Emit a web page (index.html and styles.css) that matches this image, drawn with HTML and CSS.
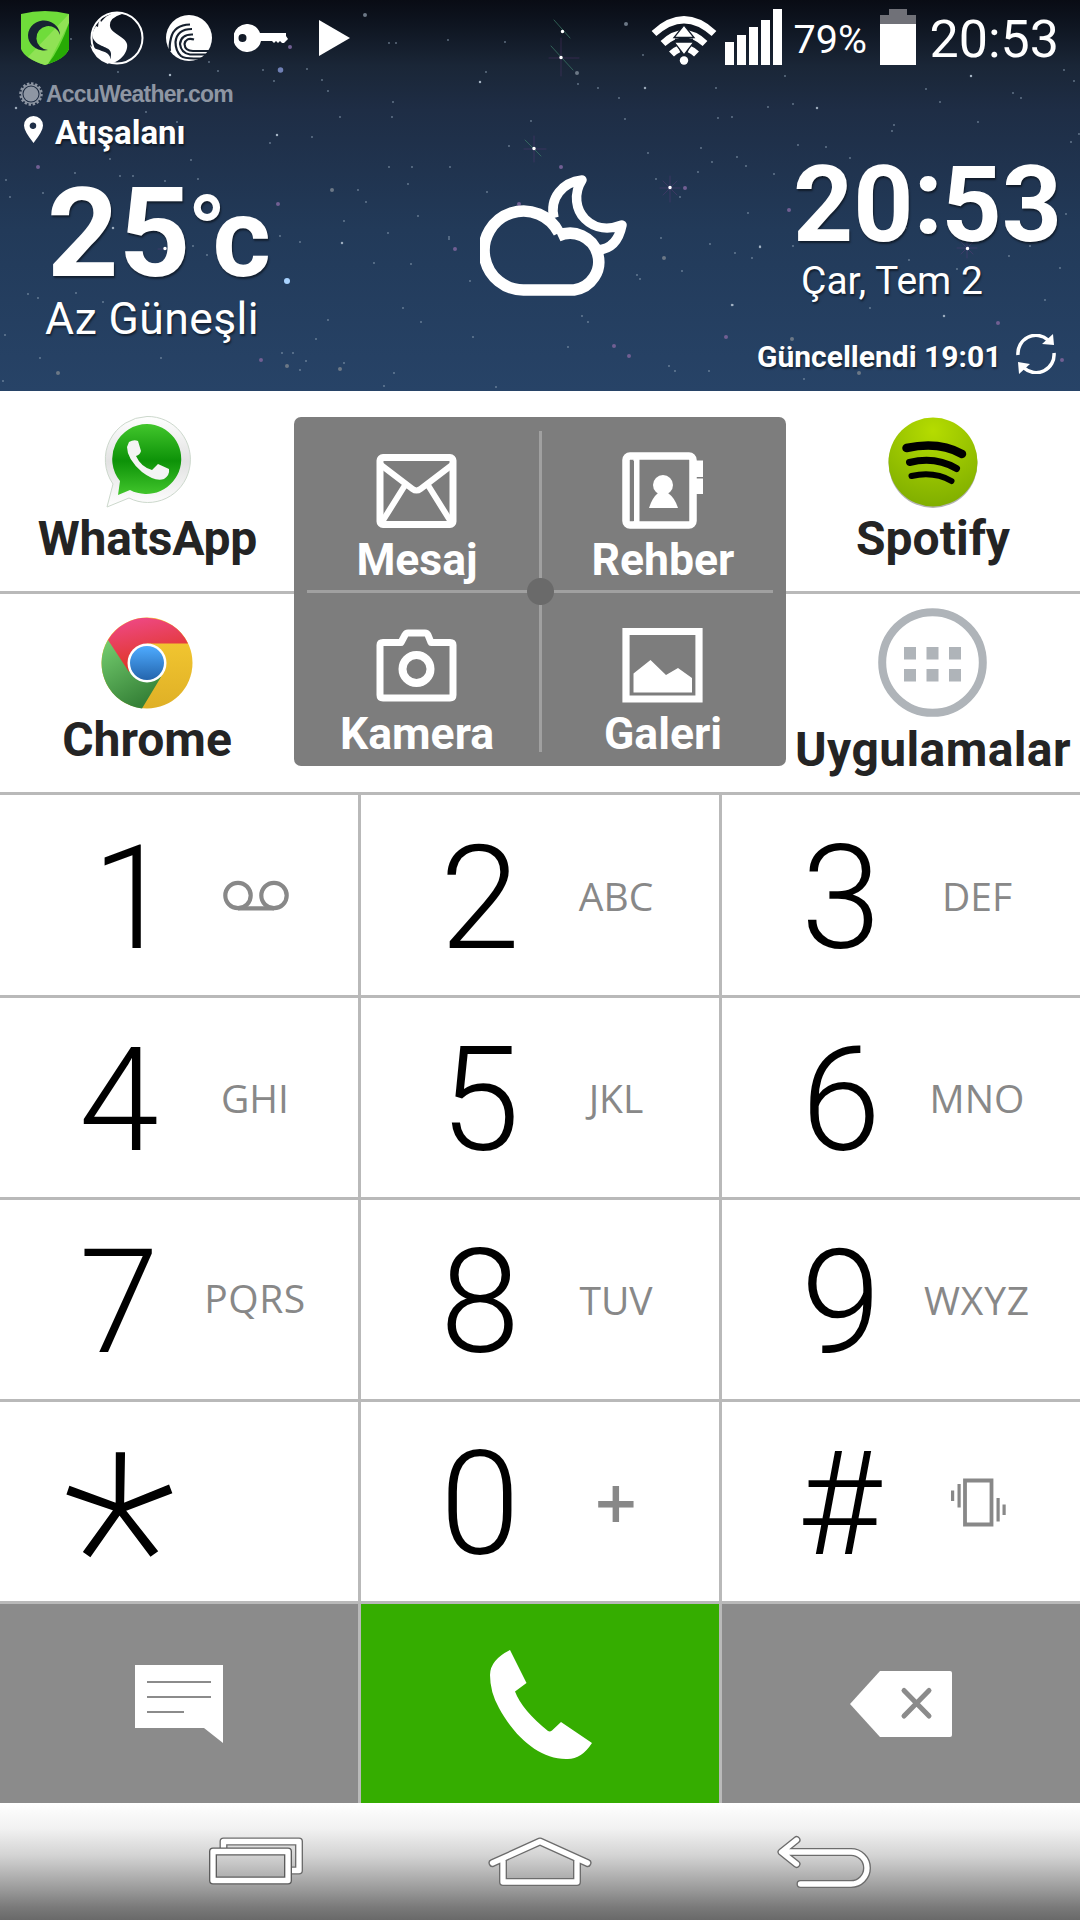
FILE: index.html
```html
<!DOCTYPE html>
<html lang="tr">
<head>
    <meta charset="UTF-8">
    <meta name="viewport" content="width=device-width, initial-scale=1.0">
    <title>Telefon</title>
    <link rel="stylesheet" href="styles.css">
</head>
<body>
    <div class="phone">
        <div class="header">
            <!-- Night sky -->
            <svg class="sky" viewBox="0 0 1080 391" fill="none" stroke-linecap="round">
                <path stroke="#8fa3b5" stroke-opacity=".6" stroke-width="2" d="M71 39h0M170 75h0M118 72h0M209 62h0M218 71h0M263 70h0M274 81h0M307 69h0M322 80h0M328 91h0M389 43h0M396 43h0M448 40h0M505 42h0M480 82h0M486 72h0M393 102h0M340 117h0M392 117h0M312 137h0M277 135h0M270 143h0M146 112h0M177 122h0M110 159h0M75 173h0M191 160h0M120 176h0M133 176h0M165 181h0M198 179h0M412 167h0M389 167h0M450 167h0M487 192h0M509 146h0M531 121h0M408 184h0M358 190h0M366 202h0M418 216h0M344 221h0M388 233h0M300 242h0M374 263h0M449 239h0M411 264h0M449 237h0M470 281h0M280 236h0M207 255h0M193 246h0M28 294h0M38 298h0M103 302h0M76 293h0M40 358h0M161 358h0M282 353h0M293 353h0M306 361h0M344 363h0M328 320h0M316 339h0M403 308h0M421 322h0M473 337h0M496 387h0M384 386h0M394 373h0M300 370h0M3 381h0M5 335h0M10 197h0M6 180h0M43 193h0M643 55h0M598 88h0M578 84h0M619 98h0M625 119h0M716 88h0M793 104h0M785 76h0M768 107h0M732 117h0M718 118h0M701 148h0M648 153h0M737 157h0M746 166h0M712 162h0M698 172h0M774 174h0M850 158h0M864 187h0M826 147h0M894 125h0M892 131h0M940 102h0M926 89h0M971 76h0M1021 98h0M1013 93h0M978 122h0M1050 52h0M1064 70h0M1074 81h0M1071 142h0M1079 134h0M661 238h0M682 271h0M710 244h0M735 253h0M760 246h0M752 258h0M798 145h0M582 316h0M588 322h0M637 275h0M669 366h0M675 371h0M733 305h0M793 246h0M906 228h0M1045 300h0M1060 268h0M909 260h0M1009 256h0M1030 246h0M1066 214h0M804 379h0M709 371h0M870 308h0M957 269h0M568 347h0M640 279h0M680 197h0M656 179h0M748 213h0"/>
                <path stroke="#b9c7d6" stroke-opacity=".8" stroke-width="2.500" d="M16 108h0M170 75h0M113 228h0M480 82h0M817 108h0M971 76h0M645 88h0M732 305h0M944 316h0M760 247h0M342 243h0M277 135h0"/>
                <path stroke="#715f93" stroke-width="4" d="M38 167h0M278 204h0M290 47h0M261 360h0M455 249h0M519 204h0M726 337h0M789 210h0M685 188h0M998 323h0M1062 360h0M561 167h0M629 356h0M614 346h0"/>
                <path stroke="#6c7886" stroke-width="4" d="M332 190h0M365 15h0M58 373h0M287 366h0M340 369h0M859 373h0M792 339h0M626 24h0M664 258h0M577 73h0"/>
                <path stroke="#7080b5" stroke-width="5.500" d="M280.500 70h0"/>
                <path stroke="#a9d3ff" stroke-width="6" d="M287 281h0"/>
                <path stroke="#3d7d68" stroke-opacity=".7" d="M551 46l22 24M554 20l16 18M525 140l16 16"/>
                <path stroke="#7b3f8b" stroke-opacity=".3" d="M561 38v38M549 58h30M534 136v26M524 149h22M670 176v26M660 188h20M663 181l14 14M677 181l-14 14M967 238v20M957 248h20M961 242l12 12M973 242l-12 12M158 249h8"/>
                <path stroke="#fff" stroke-width="3.500" d="M561 57.500h0M562.500 31.500h0M534 148.500h0M670 187.500h0M967.500 248.500h0M165 248.500h0"/>
            </svg>

            <!-- Status bar -->
            <div class="status-bar">
                <div class="status-left">
                    <svg class="ic-shield" width="48" height="54" viewBox="0 0 48 54">
                        <path fill="#6fdc3a" d="M0 3Q24-3 48 3V38Q44 48 24 54Q4 48 0 38Z"/>
                        <path fill="#98e35c" d="M48 3V12L27 53L24 54Q14 51 7 46Z" opacity=".8"/>
                        <path fill="#27aa05" d="M48 12V38Q44 48 27 53Q39 38 48 12Z"/>
                        <path fill="#172333" d="M39 24A16 15 0 1 0 27 39A12 12 0 1 1 39 24Z"/>
                    </svg>
                    <svg class="ic-snap" width="54" height="54" viewBox="0 0 54 54">
                        <circle cx="27" cy="27" r="25.500" fill="none" stroke="#fff" stroke-width="2"/>
                        <path fill="#fff" d="M27 1Q17 3 11 11L10 8Q8 12 8 16L6 15Q0 24 4 29C9 37 22 35 21 44Q21 50 16 51C25 56 39 43 37 33C35 25 21 23 20 15Q19 7 32 3Z"/>
                        <path fill="#fff" d="M0 34C5 40 18 39 20 46Q21 50 18 53Q4 48 0 34Z"/>
                    </svg>
                    <svg class="ic-torrent" width="46" height="46" viewBox="0 0 46 46">
                        <circle cx="23" cy="23" r="23" fill="#fff"/>
                        <g fill="none" stroke="#16202e" stroke-width="2.200">
                            <path d="M24 9.500Q8 10 5 23Q3 31 4 36"/>
                            <path d="M26 14Q11 14 9.500 27Q9.500 36 15 41Q18 43.500 28 43.500H38"/>
                            <path d="M27 19.500Q15 19 14 29Q15 38 24 39.500H42"/>
                            <path d="M28 24.500Q20 22 18.500 29Q19 36 27 36H46"/>
                        </g>
                    </svg>
                    <svg class="ic-key" width="54" height="28" viewBox="0 0 54 28">
                        <path fill="#fff" fill-rule="evenodd" d="M14 0A14 14 0 0 1 26 9H52V12L54 15L50 19H48L46 17L44 19L42 17L40 19L38 17H27A14 14 0 1 1 14 0ZM8.500 10A4 4 0 1 0 8.500 18A4 4 0 0 0 8.500 10Z"/>
                    </svg>
                    <svg class="ic-play" width="31" height="36" viewBox="0 0 31 36"><path fill="#fff" d="M0 0L31 18L0 36Z"/></svg>
                </div>
                <div class="status-right">
                    <svg class="ic-wifi" width="66" height="49" viewBox="0 0 66 49">
                        <g fill="none" stroke="#fff" stroke-width="7">
                            <path d="M3 17.500Q33-10 63 17.500"/>
                            <path d="M12 27.500Q33 8 54 27.500"/>
                            <path d="M20.500 38Q24 34.500 28 33M45.500 38Q42 34.500 38 33"/>
                        </g>
                        <path fill="#fff" stroke="#131c2a" stroke-width="1.300" d="M33 9L43 21.500H23ZM23 26H43L33 39Z"/>
                        <path stroke="#131c2a" stroke-width="3" d="M24 24H42"/>
                        <circle cx="33" cy="44.500" r="4.200" fill="#fff"/>
                    </svg>
                    <svg class="ic-signal" width="57" height="56" viewBox="0 0 57 56"><path fill="#fff" d="M0 33h9v23H0zM12 26h9v30h-9zM24 18h9v38h-9zM36 11h9v45h-9zM48 0h9v56h-9z"/></svg>
                    <span class="battery-text">79%</span>
                    <svg class="ic-battery" width="36" height="56" viewBox="0 0 36 56"><path fill="#707178" d="M9 0h18v6h9v9H0V6h9z"/><path fill="#fff" d="M0 15h36v41H0z"/></svg>
                    <span class="status-time">20:53</span>
                </div>
            </div>

            <!-- Weather widget -->
            <div class="weather">
                <div class="weather-now">
                    <div class="brand">
                        <svg width="24" height="24" viewBox="0 0 24 24">
                            <circle cx="12" cy="12" r="10.500" fill="none" stroke="#8e96a3" stroke-width="2.500" stroke-dasharray="2.400 1.700"/>
                            <circle cx="12" cy="12" r="9.300" fill="none" stroke="#8e96a3" stroke-width="1.500"/>
                            <circle cx="12" cy="12" r="7.500" fill="#8e96a3"/>
                        </svg>
                        <span>AccuWeather.com</span>
                    </div>
                    <div class="location">
                        <svg width="19" height="27" viewBox="0 0 19 27"><path fill="#fff" fill-rule="evenodd" d="M9.500 0A9.500 9.500 0 0 1 19 9.500Q19 15 9.500 27Q0 15 0 9.500A9.500 9.500 0 0 1 9.500 0ZM9.500 6.500A3.300 3.300 0 1 0 9.500 13A3.300 3.300 0 0 0 9.500 6.500Z"/></svg>
                        <span>Atışalanı</span>
                    </div>
                    <div class="temp">25<span class="degree">°</span><span class="unit">c</span></div>
                    <div class="condition">Az Güneşli</div>
                </div>
                <svg class="ic-weather" width="148" height="124" viewBox="480 174 148 124" fill="none" stroke="#fff" stroke-linejoin="round">
                    <path stroke-width="9.500" d="M554 218C549 198 563 182 582 180C573 194 576 210 585 219C595 229 609 230 622 225C619 240 611 249 598 250"/>
                    <path stroke-width="11.500" stroke-linejoin="miter" d="M558 236A28.500 28.500 0 1 1 574 290H525A39.500 39.500 0 1 1 559 233"/>
                </svg>
                <div class="weather-clock">
                    <div class="clock">20<span class="colon">:</span>53</div>
                    <div class="date">Çar, Tem 2</div>
                    <div class="updated">
                        <span>Güncellendi 19:01</span>
                        <svg width="40" height="40" viewBox="0 0 40 40">
                            <g fill="none" stroke="#fff" stroke-width="3.500"><path d="M2 21A18 18 0 0 1 32 6"/><path d="M38 19A18 18 0 0 1 8 34"/></g>
                            <path fill="#fff" d="M37 0L38 11L26 10ZM3 40L2 28L14 30Z"/>
                        </svg>
                    </div>
                </div>
            </div>
        </div>

        <!-- Shortcuts -->
        <div class="shortcuts">
            <div class="apps">
                <div class="app">
                    <svg width="92" height="94" viewBox="0 0 92 94">
                        <defs>
                            <linearGradient id="waGreen" x2="0" y2="1"><stop offset="0" stop-color="#42c62c"/><stop offset=".52" stop-color="#0d9208"/><stop offset="1" stop-color="#42c62c"/></linearGradient>
                            <linearGradient id="waEdge" x2="0" y2="1"><stop offset="0" stop-color="#fff"/><stop offset=".5" stop-color="#e2e2e2"/><stop offset="1" stop-color="#fff"/></linearGradient>
                        </defs>
                        <path fill="url(#waEdge)" stroke="#ccd8cc" d="M46 1.500A42.500 43 0 1 1 28 83L6 92L12 69A43 43 0 0 1 46 1.500Z"/>
                        <path fill="url(#waGreen)" d="M46 9A35 35 0 1 1 29 75L17 80L19 66A35 35 0 0 1 46 9Z"/>
                        <path fill="#f4f4f4" d="M28 27Q33 24 37 26L40 36Q39 40 35 41Q40 52 51 55L57 49L68 54Q69 60 63 64Q54 67 41 57Q26 44 26 32Z"/>
                    </svg>
                    <span class="tight">WhatsApp</span>
                </div>
                <div class="app">
                    <svg width="92" height="94" viewBox="0 0 92 94">
                        <defs>
                            <linearGradient id="crRed" x2="0.300" y2="1"><stop offset="0" stop-color="#f04a8d"/><stop offset="1" stop-color="#df3520"/></linearGradient>
                            <linearGradient id="crGreen" x2="0.500" y2="1"><stop offset="0" stop-color="#76cf70"/><stop offset="1" stop-color="#368238"/></linearGradient>
                            <linearGradient id="crYellow" x2="0" y2="1"><stop offset="0" stop-color="#f8cd34"/><stop offset="1" stop-color="#dfb026"/></linearGradient>
                            <linearGradient id="crBlue" x2="0" y2="1"><stop offset="0" stop-color="#4eabff"/><stop offset="1" stop-color="#2465ad"/></linearGradient>
                        </defs>
                        <circle cx="46" cy="47" r="45.500" fill="url(#crYellow)"/>
                        <path fill="url(#crGreen)" d="M7 24A45.500 45.500 0 0 0 41 92.500L60 61L28 50Z"/>
                        <path fill="url(#crRed)" d="M7 24A45.500 45.500 0 0 1 87 27.500H46L28 56Z"/>
                        <circle cx="46" cy="47" r="19.500" fill="#fff"/>
                        <circle cx="46" cy="47" r="17" fill="url(#crBlue)"/>
                    </svg>
                    <span>Chrome</span>
                </div>
            </div>

            <div class="panel">
                <div class="panel-item">
                    <svg width="82" height="78" viewBox="0 0 82 78" fill="none" stroke="#fff" stroke-width="7" stroke-linejoin="round">
                        <rect x="4" y="5.500" width="73" height="67" rx="3"/>
                        <path d="M5 13L36.500 37Q40.500 40 44.500 37L76 13M6 70L28.500 34M75 70L52.500 34" stroke-width="6"/>
                    </svg>
                    <span>Mesaj</span>
                </div>
                <div class="panel-item">
                    <svg width="82" height="78" viewBox="0 0 82 78">
                        <rect x="4" y="4" width="67" height="69" rx="4" fill="none" stroke="#fff" stroke-width="7.500"/>
                        <path fill="#fff" d="M11.500 7h6v64h-6zM73 8.500h8v16.500h-8zM73 26.500h8V42h-8z"/>
                        <path fill="#7d7d7d" d="M9 9h3v60H9z"/>
                        <circle cx="41" cy="33" r="10" fill="#fff"/>
                        <path fill="#fff" d="M36 41H46Q53 46 56 56H27Q30 46 36 41Z"/>
                    </svg>
                    <span>Rehber</span>
                </div>
                <div class="panel-item">
                    <svg width="82" height="78" viewBox="0 0 82 78" fill="none" stroke="#fff" stroke-width="7" stroke-linejoin="round">
                        <path d="M4 18Q4 15.500 7 15.500H25L29 8Q30 6 32 6H49Q51 6 52 8L55 15.500H74Q77 15.500 77 18V68Q77 71 74 71H7Q4 71 4 68Z"/>
                        <circle cx="40.500" cy="42" r="14" stroke-width="8"/>
                    </svg>
                    <span>Kamera</span>
                </div>
                <div class="panel-item">
                    <svg width="82" height="78" viewBox="0 0 82 78">
                        <path fill="none" stroke="#fff" stroke-width="7.200" d="M4 4.500h73v67.500H4z"/>
                        <path fill="#fff" d="M11.500 46.500L28.500 33L44 48L56 41L70 51V65.500H11.500Z"/>
                    </svg>
                    <span>Galeri</span>
                </div>
            </div>

            <div class="apps">
                <div class="app">
                    <svg width="92" height="94" viewBox="0 0 92 94">
                        <defs>
                            <radialGradient id="spGreen" cx=".5" cy=".15" r=".9"><stop offset="0" stop-color="#b5dc00"/><stop offset="1" stop-color="#7dac00"/></radialGradient>
                        </defs>
                        <circle cx="46" cy="48.500" r="44.500" fill="#000" opacity=".3"/>
                        <circle cx="46" cy="47" r="44.500" fill="url(#spGreen)"/>
                        <g fill="none" stroke="#000" stroke-linecap="round">
                            <path stroke-width="8.500" d="M19.500 33Q52 26 75 39"/>
                            <path stroke-width="7" d="M22.500 47.500Q48 41 69.500 53.500"/>
                            <path stroke-width="6" d="M24.500 61Q47 56 64.500 66"/>
                        </g>
                    </svg>
                    <span>Spotify</span>
                </div>
                <div class="app app-drawer">
                    <svg width="110" height="110" viewBox="0 0 110 110">
                        <circle cx="54.500" cy="54.500" r="50.300" fill="none" stroke="#afb4b9" stroke-width="8"/>
                        <path fill="#afb4b9" d="M26 39h12v12.500H26zM48.500 39h12v12.500h-12zM71 39h12v12.500H71zM26 61h12v12.500H26zM48.500 61h12v12.500h-12zM71 61h12v12.500H71z"/>
                    </svg>
                    <span>Uygulamalar</span>
                </div>
            </div>
        </div>

        <!-- Dial pad -->
        <div class="keypad">
            <div class="key"><span class="digit one">1</span><span class="letters voicemail"><svg width="66" height="31" viewBox="0 0 66 31" fill="none" stroke="#888" stroke-width="4.200"><circle cx="15" cy="15.500" r="12.700"/><circle cx="51" cy="15.500" r="12.700"/><path d="M15 28.300H51"/></svg></span></div>
            <div class="key"><span class="digit">2</span><span class="letters">ABC</span></div>
            <div class="key"><span class="digit">3</span><span class="letters">DEF</span></div>
            <div class="key"><span class="digit">4</span><span class="letters">GHI</span></div>
            <div class="key"><span class="digit">5</span><span class="letters">JKL</span></div>
            <div class="key"><span class="digit">6</span><span class="letters">MNO</span></div>
            <div class="key"><span class="digit">7</span><span class="letters pqrs">PQRS</span></div>
            <div class="key"><span class="digit">8</span><span class="letters">TUV</span></div>
            <div class="key"><span class="digit">9</span><span class="letters wxyz">WXYZ</span></div>
            <div class="key"><span class="digit star">*</span></div>
            <div class="key"><span class="digit">0</span><span class="letters plus">+</span></div>
            <div class="key"><span class="digit hash">#</span><span class="letters vibrate"><svg width="55" height="49" viewBox="0 0 55 49"><path fill="none" stroke="#888" stroke-width="3.800" d="M14 2.500h26.500v44H14z"/><path fill="#888" d="M0 12.500h3.200v10.500H0zM6.500 6h3.200v23.500H6.500zM45.500 20h3.200v23.500h-3.200zM51.500 26.500h3.200V37h-3.200z"/></svg></span></div>
            <div class="key action">
                <svg width="88" height="78" viewBox="0 0 88 78"><path fill="#fff" d="M0 0H88V78L69 63H0Z"/><path stroke="#8b8b8b" stroke-width="2.200" d="M12 17H76M12 32H76M12 47H49"/></svg>
            </div>
            <div class="key action call">
                <svg width="102" height="110" viewBox="490 1650 102 110"><path fill="#fff" d="M510 1650L526.500 1683L515 1691.500Q522 1710 548 1731Q550 1732 552 1730.500L561 1722L592 1743Q581 1760 566 1759C539 1759 514 1736 499 1708Q490 1692 490 1675Q490 1660 510 1650Z"/></svg>
            </div>
            <div class="key action erase">
                <svg width="102" height="66" viewBox="0 0 102 66"><path fill="#fff" d="M0 33L30 0H100Q102 0 102 2V64Q102 66 100 66H30Z"/><path stroke="#8b8b8b" stroke-width="5" stroke-linecap="round" d="M54 19.500L79 45M79 19.500L54 45"/></svg>
            </div>
        </div>

        <!-- System buttons: each shape is stroked dark first, then white on top -->
        <div class="nav-bar">
            <svg width="96" height="50" viewBox="208 1838 96 50" fill="none" stroke-linejoin="round">
                <path stroke="#6c6c6c" stroke-width="8" d="M223.500 1850V1842.500H299V1871.500H291"/>
                <path stroke="#fff" stroke-width="5.300" d="M223.500 1850V1842.500H299V1871.500H291"/>
                <path stroke="#5c5c5c" stroke-width="8" d="M213 1852.500h75v29H213z"/>
                <path stroke="#fff" stroke-width="5.300" d="M213 1852.500h75v29H213z"/>
            </svg>
            <svg width="106" height="52" viewBox="487 1836 106 52" fill="none" stroke-linejoin="round" stroke-linecap="round">
                <path stroke="#6c6c6c" stroke-width="8" d="M492.500 1863L540 1841.500L587.500 1863M503 1861V1882H577V1861"/>
                <path stroke="#fff" stroke-width="5.300" d="M492.500 1863L540 1841.500L587.500 1863M503 1861V1882H577V1861"/>
            </svg>
            <svg width="96" height="54" viewBox="776 1834 96 54" fill="none" stroke-linejoin="round" stroke-linecap="round">
                <path stroke="#6c6c6c" stroke-width="8" d="M796.500 1839L781.500 1851L796.500 1863M783 1851H851A15.900 15.900 0 0 1 851 1883H800.500"/>
                <path stroke="#fff" stroke-width="5.300" d="M796.500 1839L781.500 1851L796.500 1863M783 1851H851A15.900 15.900 0 0 1 851 1883H800.500"/>
            </svg>
        </div>
    </div>
</body>
</html>
```
FILE: styles.css
```css
body {
    margin: 0;
    font-family: Roboto, Arial, sans-serif;
    background-color: #fff;
}
svg {
    display: block;
    flex-shrink: 0;
}
.phone {
    width: 1080px;
    height: 1920px;
    overflow: hidden;
}

/* Header */
.header {
    position: relative;
    height: 391px;
    color: #fff;
    background: linear-gradient(#090c14 0, #0d131e 20px, #1a2637 66px, #1e2d45 110px, #223a59 230px, #274367 391px);
}
.sky {
    position: absolute;
    top: 0;
    left: 0;
    width: 100%;
    height: 100%;
}
.status-bar {
    position: relative;
    display: flex;
    justify-content: space-between;
    height: 76px;
    padding: 0 21px 0 21px;
    box-sizing: border-box;
}
.status-left,
.status-right {
    display: flex;
    align-items: center;
}
.ic-snap {
    margin-left: 21px;
}
.ic-torrent {
    margin-left: 22px;
}
.ic-key {
    margin-left: 22px;
}
.ic-play {
    margin-left: 31px;
}
.ic-wifi {
    margin-top: 4px;
}
.ic-signal {
    margin: -2px 12px 0 8px;
}
.battery-text {
    width: 76px;
    padding-top: 3px;
    font-size: 39.5px;
}
.ic-battery {
    margin: -2px 14px 0 10px;
}
.status-time {
    padding-top: 3px;
    font-size: 52px;
}

/* Weather */
.weather {
    position: relative;
    display: grid;
    grid-template-columns: 480px 148px 1fr;
    height: 315px;
    text-shadow: 1px 2px 2px rgba(0,0,0,0.5);
}
.brand {
    display: flex;
    align-items: center;
    gap: 3px;
    height: 30px;
    margin-top: 3px;
    padding-left: 19px;
    color: #8e96a3;
    font-family: "Liberation Sans", Arial, sans-serif;
    font-size: 23px;
    font-weight: bold;
    letter-spacing: -0.8px;
    text-shadow: none;
}
.location {
    display: flex;
    gap: 12px;
    margin-top: 4px;
    padding-left: 24px;
    font-size: 33px;
    font-weight: bold;
    line-height: 40px;
}
.location svg {
    margin-top: 3px;
}
.temp {
    display: flex;
    height: 130px;
    margin-top: 16px;
    padding-left: 47px;
    font-size: 125px;
    font-weight: bold;
    line-height: 130px;
}
.degree {
    width: 25px;
    margin-left: -3px;
    font-size: 100px;
    line-height: 127px;
}
.unit {
    font-size: 112px;
    line-height: 137px;
}
.condition {
    margin-top: -5px;
    padding-left: 45px;
    font-size: 44.5px;
    line-height: 50px;
    letter-spacing: 0.4px;
}
.ic-weather {
    margin-top: 98px;
}
.clock {
    margin-top: 75px;
    padding-left: 165px;
    font-size: 105px;
    font-weight: bold;
    line-height: 110px;
    white-space: nowrap;
}
.colon {
    display: inline-block;
    width: 28px;
    line-height: 90px;
    vertical-align: 8px;
}
.date {
    margin-top: -2px;
    padding-left: 173px;
    font-size: 39px;
    line-height: 44px;
}
.updated {
    display: flex;
    gap: 15px;
    margin-top: 34px;
    padding-left: 129px;
    font-size: 30px;
    font-weight: bold;
    line-height: 40px;
}
.updated svg {
    margin-top: -3px;
}

/* Shortcuts */
.shortcuts {
    display: grid;
    grid-template-columns: 294px 492px 294px;
    height: 401px;
    border-bottom: 3px solid #b9b9b9;
}
.app {
    display: flex;
    flex-direction: column;
    align-items: center;
    gap: 2px;
    height: 200px;
    padding-top: 24px;
    box-sizing: border-box;
    color: #242424;
    font-size: 48px;
    font-weight: bold;
    line-height: 56px;
}
.app:first-child {
    height: 203px;
    border-bottom: 3px solid #b9b9b9;
}
.app:last-child {
    padding-top: 22px;
}
.app.app-drawer {
    padding-top: 14px;
}
.app-drawer span {
    margin-top: 2px;
    letter-spacing: 0.4px;
}
.tight {
    margin-left: 1px;
    letter-spacing: -0.2px;
}
.panel {
    position: relative;
    display: grid;
    grid-template-columns: 1fr 1fr;
    grid-template-rows: 1fr 1fr;
    height: 349px;
    margin-top: 26px;
    color: #fff;
    border-radius: 7px;
    background:
        radial-gradient(circle at 246.5px 174.5px, #6a6a6a 13px, transparent 14px),
        linear-gradient(#a0a0a0, #a0a0a0) 13px 173px / 466px 3px no-repeat,
        linear-gradient(#a0a0a0, #a0a0a0) 245px 14px / 3px 321px no-repeat,
        #7d7d7d;
}
.panel-item {
    display: flex;
    flex-direction: column;
    align-items: center;
    gap: 4px;
    padding-top: 35px;
    font-size: 44.5px;
    font-weight: bold;
    line-height: 52px;
}
.panel-item:nth-child(n+3) {
    gap: 3px;
}

/* Dial pad */
.keypad {
    display: grid;
    grid-template-columns: repeat(3, 358px);
    grid-template-rows: 200px repeat(4, 199px);
    gap: 3px;
    background-color: #b9b9b9;
}
.key {
    display: flex;
    align-items: center;
    background-color: #fff;
}
.digit {
    width: 150px;
    padding: 7px 0 0 44px;
    margin-right: 1px;
    color: #000;
    font-size: 144px;
    font-weight: 300;
    line-height: 192px;
    text-align: center;
}
.one {
    padding-left: 57px;
    margin-right: -12px;
}
.letters {
    display: flex;
    justify-content: center;
    width: 120px;
    padding-top: 1px;
    color: #888;
    font-family: "Open Sans", sans-serif;
    font-size: 39px;
    font-weight: 500;
    line-height: 50px;
}
.voicemail svg {
    margin-left: 2px;
}
.pqrs {
    margin-top: -4px;
    letter-spacing: 0.5px;
}
.wxyz {
    letter-spacing: 0.8px;
}
.star {
    height: 192px;
    font-size: 264px;
    font-weight: 100;
    line-height: 284px;
    -webkit-text-stroke: 2px #000;
}
.hash {
    padding-left: 42px;
    margin-right: 3px;
}
.plus {
    font-size: 74px;
    font-weight: 600;
}
.vibrate svg {
    margin-left: 3px;
}
.action {
    justify-content: center;
    background-color: #8b8b8b;
}
.call {
    background-color: #35ad00;
}
.call svg {
    margin: 2px 0 0 2px;
}

/* System buttons */
.nav-bar {
    display: flex;
    justify-content: space-between;
    align-items: center;
    height: 117px;
    padding: 0 208px;
    box-sizing: border-box;
    background: linear-gradient(#fff 0, #f1f1f1 26px, #d4d4d4 52px, #b6b6b6 70px, #999 87px, #7a7a7a 104px, #696969 117px);
}
```
